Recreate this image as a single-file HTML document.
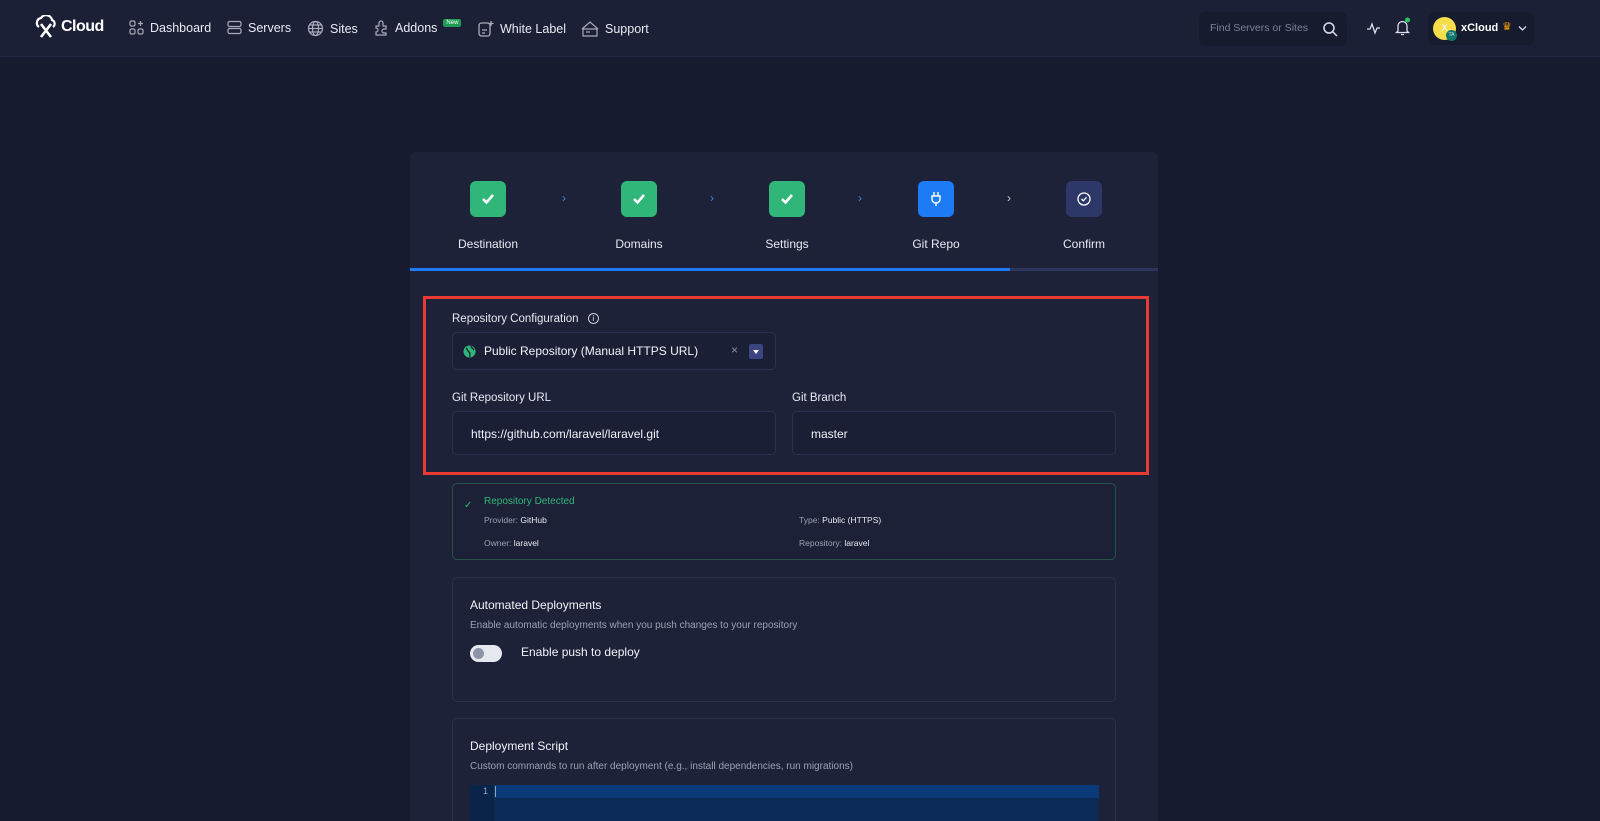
<!DOCTYPE html>
<html style="width:1600px;height:821px;overflow:hidden"><head><meta charset="utf-8"><style>
*{box-sizing:border-box;margin:0;padding:0}
html,body{width:1600px;height:821px;overflow:hidden}
body{background:#171b2f;font-family:"Liberation Sans",sans-serif;color:#e6e8f0}
#wrap{position:relative;width:1600px;height:821px;overflow:hidden}
.hdr{position:absolute;left:0;top:0;width:1600px;height:57px;background:#1c2036;border-bottom:1px solid #262b45}
.nav{position:absolute;top:20px;font-size:12.5px;color:#e8eaf2;display:flex;align-items:center;gap:6px}
.abs{position:absolute}
.card{position:absolute;left:410px;top:152px;width:748px;height:669px;background:#1e2239;border-radius:6px 6px 0 0}
.step{position:absolute;top:29px;width:36px;height:36px;border-radius:6px;display:flex;align-items:center;justify-content:center}
.g{background:#2fb678}
.lbl{position:absolute;top:85px;font-size:12px;color:#e6e8f0;transform:translateX(-50%)}
.chev{position:absolute;top:39px;color:#3b82f6;font-size:12px}
.box{position:absolute;background:#1b1f35;border:1px solid #2c3150;border-radius:5px;overflow:hidden}
.fl{position:absolute;font-size:11.5px;color:#e6e8f0}
.sm{font-size:8.5px;color:#9aa0b4}
.sm b{color:#e6e8f0;font-weight:normal}
</style></head><body><div id="wrap">
<div class="hdr">
  <div class="abs" style="left:33px;top:15px;display:flex;align-items:center;gap:2px">
    <svg width="26" height="24" viewBox="0 0 26 24"><path d="M6 12a5 5 0 0 1 2-9 6 6 0 0 1 11 2 4 4 0 0 1 1 7" stroke="#fff" stroke-width="2.2" fill="none"/><path d="M8 9l10 13M18 9L8 22" stroke="#fff" stroke-width="2.6"/></svg>
    <span style="font-weight:bold;font-size:16px;color:#fff;letter-spacing:-0.5px">Cloud</span>
  </div>
  <div class="nav" style="left:129px"><svg width="15" height="15" viewBox="0 0 15 15" fill="none" stroke="#aab" stroke-width="1.2"><rect x="1" y="1" width="5" height="5" rx="1.5"/><rect x="1" y="9" width="5" height="5" rx="1.5"/><rect x="9" y="9" width="5" height="5" rx="1.5"/><path d="M11.5 1v5M9 3.5h5"/></svg>Dashboard</div>
  <div class="nav" style="left:227px"><svg width="15" height="15" viewBox="0 0 15 15" fill="none" stroke="#aab" stroke-width="1.2"><rect x="1" y="1.5" width="13" height="5" rx="1.5"/><rect x="1" y="8.5" width="13" height="5" rx="1.5"/></svg>Servers</div>
  <div class="nav" style="left:307px"><svg width="17" height="17" viewBox="0 0 17 17" fill="none" stroke="#aab" stroke-width="1.2"><circle cx="8.5" cy="8.5" r="7"/><ellipse cx="8.5" cy="8.5" rx="3" ry="7"/><path d="M1.5 8.5h14M2.5 5h12M2.5 12h12"/></svg>Sites</div>
  <div class="nav" style="left:373px"><svg width="16" height="16" viewBox="0 0 16 16" fill="none" stroke="#aab" stroke-width="1.2"><path d="M3 6h3V3a2 2 0 0 1 4 0v3h3v3h-2a2 2 0 0 0 0 4h2v2H3v-3a2 2 0 0 0 0-4z"/></svg>Addons<span style="background:#1f9d55;color:#fff;font-size:6px;padding:1px 3px;border-radius:2px;margin-top:-10px">New</span></div>
  <div class="nav" style="left:478px"><svg width="16" height="17" viewBox="0 0 16 17" fill="none" stroke="#aab" stroke-width="1.3"><rect x="1" y="3" width="11" height="13" rx="2.5"/><path d="M4 10h5M4 13h3M13 1v5M10.5 3.5h5"/></svg>White Label</div>
  <div class="nav" style="left:581px"><svg width="18" height="17" viewBox="0 0 18 17" fill="none" stroke="#aab" stroke-width="1.2"><path d="M1 9l8-7 8 7M2 9h14v7H2z"/><path d="M5 12h4"/></svg>Support</div>
  <div class="abs" style="left:1199px;top:12px;width:148px;height:34px;background:#171b2e;border-radius:6px"><span class="abs" style="left:11px;top:10px;font-size:10.5px;color:#7a8098">Find Servers or Sites</span><svg class="abs" style="left:123px;top:9px" width="16" height="16" viewBox="0 0 16 16" fill="none" stroke="#dde" stroke-width="1.5"><circle cx="7" cy="7" r="5"/><path d="M11 11l4 4"/></svg></div>
  <svg class="abs" style="left:1366px;top:21px" width="15" height="14" viewBox="0 0 15 14" fill="none" stroke="#dde" stroke-width="1.3"><path d="M1 8h3l2-5 3 9 2-5h3"/></svg>
  <svg class="abs" style="left:1394px;top:17px" width="18" height="20" viewBox="0 0 18 20" fill="none" stroke="#dde" stroke-width="1.3"><path d="M4 14V9a4.5 4.5 0 0 1 9 0v5l1.5 1.5h-12zM7 17.5h3"/><circle cx="13.5" cy="3" r="2.5" fill="#22c55e" stroke="none"/></svg>
  <div class="abs" style="left:1428px;top:12px;width:106px;height:33px;background:#171b2e;border-radius:6px">
    <div class="abs" style="left:5px;top:5px;width:23px;height:23px;border-radius:50%;background:#f5dd4b;color:#fff;font-size:10px;text-align:center;line-height:23px">X</div>
    <div class="abs" style="left:18px;top:18px;width:11px;height:11px;border-radius:50%;background:#0f766e;font-size:5px;text-align:center;line-height:11px;color:#dde">TA</div>
    <span class="abs" style="left:33px;top:10px;font-size:11px;font-weight:bold;color:#fff">xCloud</span>
    <span class="abs" style="left:74px;top:8px;font-size:11px;color:#f59e0b">♛</span>
    <svg class="abs" style="left:90px;top:13px" width="9" height="7" viewBox="0 0 9 7" fill="none" stroke="#dde" stroke-width="1.3"><path d="M1 1.5l3.5 3.5L8 1.5"/></svg>
  </div>
</div>

<div class="card">
  <div class="step g" style="left:60px"><svg width="14" height="12" viewBox="0 0 14 12"><path d="M2 6l3.5 3.5L12 2" stroke="#fff" stroke-width="2.6" fill="none"/></svg></div>
  <div class="step g" style="left:211px"><svg width="14" height="12" viewBox="0 0 14 12"><path d="M2 6l3.5 3.5L12 2" stroke="#fff" stroke-width="2.6" fill="none"/></svg></div>
  <div class="step g" style="left:359px"><svg width="14" height="12" viewBox="0 0 14 12"><path d="M2 6l3.5 3.5L12 2" stroke="#fff" stroke-width="2.6" fill="none"/></svg></div>
  <div class="step" style="left:508px;background:#1d7bf5"><svg width="12" height="16" viewBox="0 0 12 16" fill="none" stroke="#fff" stroke-width="1.4"><path d="M4 1v4M8 1v4M2 5h8v3a4 4 0 0 1-8 0zM6 12v3"/></svg></div>
  <div class="step" style="left:656px;background:#2d3868"><svg width="14" height="14" viewBox="0 0 14 14" fill="none" stroke="#fff" stroke-width="1.3"><circle cx="7" cy="7" r="6"/><path d="M4.5 7l1.8 1.8L9.5 5.3"/></svg></div>
  <span class="chev" style="left:152px">›</span><span class="chev" style="left:300px">›</span><span class="chev" style="left:448px">›</span><span class="chev" style="left:597px;color:#c8cbd8">›</span>
  <span class="lbl" style="left:78px">Destination</span><span class="lbl" style="left:229px">Domains</span><span class="lbl" style="left:377px">Settings</span><span class="lbl" style="left:526px">Git Repo</span><span class="lbl" style="left:674px">Confirm</span>
  <div class="abs" style="left:0;top:116px;width:748px;height:3px;background:#2d3460"></div>
  <div class="abs" style="left:0;top:116px;width:600px;height:3px;background:#1d7bf5"></div>
</div>

<div class="abs" style="left:423px;top:296px;width:726px;height:179px;border:3px solid #ea3a33"></div>
<div class="fl" style="left:452px;top:313px">Repository Configuration <span style="display:inline-block;width:11px;height:11px;border:1px solid #ccd;border-radius:50%;font-size:8px;text-align:center;line-height:10px;margin-left:6px;vertical-align:1px">i</span></div>
<div class="box" style="left:452px;top:332px;width:324px;height:38px">
  <svg class="abs" style="left:10px;top:12px" width="13" height="13" viewBox="0 0 13 13"><circle cx="6.5" cy="6.5" r="6" fill="#2fb678"/><path d="M3 3c2 1 1 3 3 4s0 3 1 5M8 1c0 2 2 2 3 4" stroke="#1b1f35" stroke-width="1.3" fill="none"/></svg>
  <span class="abs" style="left:31px;top:11px;font-size:12px;color:#f0f2f8">Public Repository (Manual HTTPS URL)</span>
  <span class="abs" style="left:278px;top:10px;font-size:12px;color:#8a90a6">×</span>
  <div class="abs" style="left:296px;top:11px;width:14px;height:15px;background:#3b4580;border-radius:2px"><svg width="14" height="15" viewBox="0 0 14 15"><path d="M4 6h6l-3 4z" fill="#fff"/></svg></div>
</div>
<div class="fl" style="left:452px;top:392px">Git Repository URL</div>
<div class="fl" style="left:792px;top:392px">Git Branch</div>
<div class="box" style="left:452px;top:411px;width:324px;height:44px"><span class="abs" style="left:18px;top:15px;font-size:12px;color:#f0f2f8">https://github.com/laravel/laravel.git</span></div>
<div class="box" style="left:792px;top:411px;width:324px;height:44px"><span class="abs" style="left:18px;top:15px;font-size:12px;color:#f0f2f8">master</span></div>

<div class="box" style="left:452px;top:483px;width:664px;height:77px;border-color:#235446;background:#1d2137">
  <span class="abs" style="left:11px;top:16px;color:#2fb678;font-size:10px">✓</span>
  <span class="abs" style="left:31px;top:12px;color:#2fb678;font-size:10px">Repository Detected</span>
  <span class="abs sm" style="left:31px;top:31px">Provider: <b>GitHub</b></span>
  <span class="abs sm" style="left:346px;top:31px">Type: <b>Public (HTTPS)</b></span>
  <span class="abs sm" style="left:31px;top:54px">Owner: <b>laravel</b></span>
  <span class="abs sm" style="left:346px;top:54px">Repository: <b>laravel</b></span>
</div>

<div class="box" style="left:452px;top:577px;width:664px;height:125px;background:#1e2239;border-color:#2a2f4c">
  <span class="abs" style="left:17px;top:20px;font-size:12px;color:#f0f2f8">Automated Deployments</span>
  <span class="abs" style="left:17px;top:42px;font-size:10px;color:#9aa0b4">Enable automatic deployments when you push changes to your repository</span>
  <div class="abs" style="left:17px;top:67px;width:32px;height:17px;border-radius:9px;background:#e6e8ef"><div class="abs" style="left:3px;top:3px;width:11px;height:11px;border-radius:50%;background:#8d93a6"></div></div>
  <span class="abs" style="left:68px;top:67px;font-size:12px;color:#f0f2f8">Enable push to deploy</span>
</div>

<div class="box" style="left:452px;top:718px;width:664px;height:103px;background:#1e2239;border-color:#2a2f4c;border-bottom:none;border-radius:5px 5px 0 0">
  <span class="abs" style="left:17px;top:20px;font-size:12px;color:#f0f2f8">Deployment Script</span>
  <span class="abs" style="left:17px;top:42px;font-size:10px;color:#9aa0b4">Custom commands to run after deployment (e.g., install dependencies, run migrations)</span>
  <div class="abs" style="left:17px;top:66px;width:629px;height:37px;background:#0b2a55"></div>
  <div class="abs" style="left:17px;top:66px;width:24px;height:37px;background:#0a2348"></div>
  <div class="abs" style="left:41px;top:66px;width:605px;height:13px;background:#0a3a78"></div>
  <div class="abs" style="left:42px;top:67px;width:1px;height:11px;background:#8aa"></div>
  <span class="abs" style="left:30px;top:67px;font-size:9px;color:#9aa8c8">1</span>
</div>
</div></body></html>
